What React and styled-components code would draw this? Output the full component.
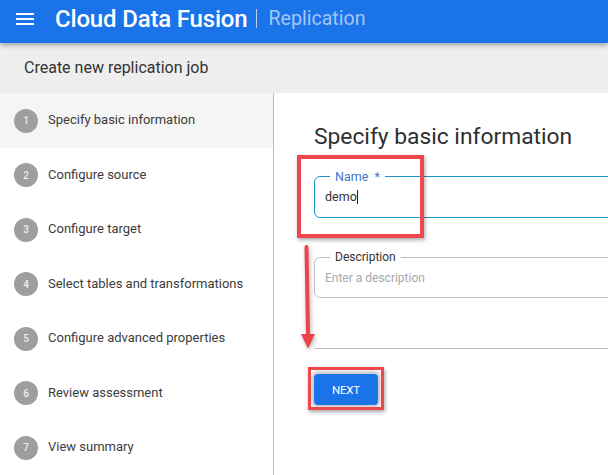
import React from "react";
import styled, { createGlobalStyle } from "styled-components";

const GlobalStyle = createGlobalStyle`
  html, body {
    margin: 0;
    padding: 0;
    background: #fff;
    font-family: Roboto, "Liberation Sans", sans-serif;
  }
`;

const steps = [
  "Specify basic information",
  "Configure source",
  "Configure target",
  "Select tables and transformations",
  "Configure advanced properties",
  "Review assessment",
  "View summary",
];

export default function App() {
  return (
    <Page>
      <GlobalStyle />
      <Header>
        <MenuIcon viewBox="0 0 18 12">
          <rect y="0" width="18" height="2" />
          <rect y="5" width="18" height="2" />
          <rect y="10" width="18" height="2" />
        </MenuIcon>
        <Brand>Cloud Data Fusion</Brand>
        <Divider />
        <Product>Replication</Product>
      </Header>

      <SubHeader>Create new replication job</SubHeader>

      <Body>
        <Sidebar>
          {steps.map((label, i) => (
            <Step key={label} $active={i === 0}>
              <StepNumber>{i + 1}</StepNumber>
              <StepLabel>{label}</StepLabel>
            </Step>
          ))}
        </Sidebar>

        <Main>
          <Title>Specify basic information</Title>

          <NameField>
            <NameLegend>Name&nbsp;&nbsp;*</NameLegend>
            <NameValue>
              demo
              <Caret />
            </NameValue>
          </NameField>

          <DescriptionField>
            <DescriptionLegend>Description</DescriptionLegend>
            <Placeholder>Enter a description</Placeholder>
          </DescriptionField>

          <Rule />

          <NextButton>NEXT</NextButton>
        </Main>
      </Body>

      <NameHighlight />
      <ButtonHighlight />
      <Arrow viewBox="0 0 20 110">
        <path d="M6.5 3 L8 92" stroke="#ef4349" strokeWidth="4" strokeLinecap="round" fill="none" />
        <path d="M1 90 H15 L8 104.5 Z" fill="#ef4349" />
      </Arrow>
    </Page>
  );
}

const Page = styled.div`
  position: relative;
  width: 608px;
  height: 475px;
  overflow: hidden;
  background: #fff;
`;

const Header = styled.header`
  position: relative;
  z-index: 1;
  display: flex;
  align-items: center;
  height: 43px;
  padding: 0 0 6px 16px;
  background: #1a73e8;
  box-shadow: 0 2px 5px rgba(0, 0, 0, 0.35);
  box-sizing: border-box;
`;

const MenuIcon = styled.svg`
  width: 18px;
  height: 12px;
  fill: #fff;
  margin-right: 21px;
`;

const Brand = styled.div`
  color: #fff;
  font-size: 24px;
  font-weight: 500;
  letter-spacing: -0.18px;
`;

const Divider = styled.div`
  width: 1px;
  height: 19px;
  margin: 0 11px 0 9px;
  background: #b9d3f7;
`;

const Product = styled.div`
  color: #a3c6f5;
  font-size: 19.6px;
`;

const SubHeader = styled.div`
  display: flex;
  align-items: center;
  height: 50px;
  padding: 0 0 2px 24px;
  box-sizing: border-box;
  background: #eeeeee;
  color: #333;
  font-size: 16px;
`;

const Body = styled.div`
  display: flex;
  height: 382px;
`;

const Sidebar = styled.nav`
  width: 274px;
  flex: none;
  padding-top: 0.25px;
  box-sizing: border-box;
  border-right: 1px solid #bdbdbd;
`;

const Step = styled.div`
  display: flex;
  align-items: center;
  height: 54.5px;
  padding-left: 14px;
  box-sizing: border-box;
  background: ${(p) => (p.$active ? "#f5f5f5" : "#fff")};
`;

const StepNumber = styled.div`
  display: flex;
  align-items: center;
  justify-content: center;
  width: 24px;
  height: 24px;
  flex: none;
  margin-right: 10px;
  border-radius: 50%;
  background: #9e9e9e;
  color: #eee;
  font-size: 10px;
  font-weight: 500;
`;

const StepLabel = styled.div`
  margin-top: -2px;
  color: #3c3c3c;
  font-size: 13px;
`;

const Main = styled.main`
  flex: 1;
  min-width: 0;
  overflow: hidden;
  padding: 29px 0 0 40px;
  box-sizing: border-box;
`;

const Title = styled.h1`
  margin: 0 0 18px;
  color: #2f2f2f;
  font-size: 22.8px;
  line-height: 29px;
  font-weight: 400;
  white-space: nowrap;
`;

const NameField = styled.fieldset`
  width: 400px;
  height: 49px;
  margin: 0;
  padding: 0 10px;
  box-sizing: border-box;
  border: 1px solid #1a94c4;
  border-radius: 6px;
`;

const NameLegend = styled.legend`
  margin-left: 5px;
  padding: 0 5px;
  color: #3b78d0;
  font-size: 12.5px;
  line-height: 15px;
`;

const NameValue = styled.div`
  display: flex;
  align-items: center;
  height: 25px;
  color: #333;
  font-size: 12.5px;
`;

const Caret = styled.span`
  width: 1px;
  height: 14px;
  background: #222;
`;

const DescriptionField = styled.fieldset`
  width: 400px;
  height: 48px;
  margin: 32px 0 0;
  padding: 0 10px;
  box-sizing: border-box;
  border: 1px solid #bdbdbd;
  border-radius: 6px;
`;

const DescriptionLegend = styled.legend`
  margin-left: 5px;
  padding: 0 5px;
  color: #333;
  font-size: 12px;
  line-height: 15px;
`;

const Placeholder = styled.div`
  display: flex;
  align-items: center;
  height: 25px;
  color: #a8a8a8;
  font-size: 12px;
`;

const Rule = styled.div`
  width: 400px;
  height: 1px;
  margin-top: 50px;
  background: #bdbdbd;
`;

const NextButton = styled.button`
  display: block;
  width: 64px;
  height: 31px;
  margin-top: 25px;
  padding: 0;
  border: none;
  border-radius: 4px;
  background: #1a73e8;
  color: #fff;
  font-family: Roboto, sans-serif;
  font-size: 11.5px;
  font-weight: 400;
  letter-spacing: -0.2px;
  box-shadow: 0 0 3px 3px rgba(0, 0, 0, 0.2);
`;

const Highlight = styled.div`
  position: absolute;
  box-sizing: border-box;
  border: ${(p) => p.$weight}px solid #ee474c;
  box-shadow: 1px 2px 4px rgba(0, 0, 0, 0.35);
`;

const NameHighlight = styled(Highlight).attrs({ $weight: 4 })`
  left: 297px;
  top: 155px;
  width: 127px;
  height: 83px;
`;

const ButtonHighlight = styled(Highlight).attrs({ $weight: 3 })`
  left: 308px;
  top: 367px;
  width: 76px;
  height: 43px;
`;

const Arrow = styled.svg`
  position: absolute;
  left: 300px;
  top: 244px;
  width: 20px;
  height: 110px;
  filter: drop-shadow(1px 2px 2px rgba(0, 0, 0, 0.3));
`;
